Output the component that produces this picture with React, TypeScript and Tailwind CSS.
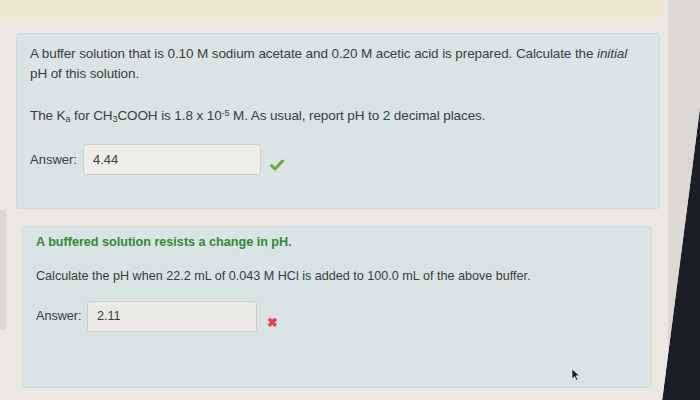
import React from "react";

export default function App() {
  return (
    <div className="w-[700px] h-[400px] overflow-hidden bg-[#1c1e27] font-['Liberation_Sans',Arial,sans-serif] text-[#3a3d40]">
      {/* screen surface, slanted right edge from the photo's bezel */}
      <div className="w-full h-full flex bg-[#d9d6d1] [clip-path:polygon(0_0,100%_0,100%_27%,94.6%_100%,0_100%)]">
        <div className="w-[668px] h-full flex flex-col bg-[#ebe8e3]">
          <div className="h-[18px] w-[665px] bg-[#eee6cf] shrink-0" />

          <div className="flex flex-1">
            {/* left edge sliver of another panel */}
            <div className="w-[6px] shrink-0 flex flex-col">
              <div className="h-[192px]" />
              <div className="h-[120px] bg-[#d9d9d6]" />
            </div>

            <div className="flex-1 flex flex-col pl-[10px] pr-[8px]">
              {/* question 1 */}
              <div className="mt-[15px] h-[176px] rounded-[3px] bg-[#dbe4e4] border border-[#d2dada] pl-[13px] pr-[20px] pt-[10px]">
                <p className="text-[13.5px] leading-[20px] tracking-[-0.1px]">
                  A buffer solution that is 0.10 M sodium acetate and 0.20 M acetic acid is prepared. Calculate the <i>initial</i> pH of this solution.
                </p>
                <p className="mt-[22px] text-[13.5px] leading-[20px] tracking-[-0.1px]">
                  The K<sub className="text-[9px]">a</sub> for CH<sub className="text-[9px]">3</sub>COOH is 1.8 x 10<sup className="text-[9px]">-5</sup> M. As usual, report pH to 2 decimal places.
                </p>
                <div className="mt-[18px] flex items-center">
                  <span className="text-[13px] w-[53px]">Answer:</span>
                  <div className="w-[178px] h-[31px] rounded-[3px] border border-[#cfcfca] bg-[#efedea] px-[9px] flex items-center text-[13px]">
                    4.44
                  </div>
                  <svg width="14" height="12" viewBox="0 0 14 12" className="ml-[9px] mt-[10px]">
                    <path d="M1.5 6.5 L5 10 L12.5 2" fill="none" stroke="#6aa83c" strokeWidth="3" strokeLinecap="round" strokeLinejoin="round" />
                  </svg>
                </div>
              </div>

              {/* question 2 */}
              <div className="mt-[17px] ml-[6px] mr-[8px] h-[162px] rounded-[3px] bg-[#d9e3e3] border border-[#d0d9d9] pl-[13px] pr-4 pt-[6px]">
                <p className="text-[12.6px] leading-[18px] font-bold text-[#2f8a35]">A buffered solution resists a change in pH.</p>
                <p className="mt-[16px] text-[12.6px] leading-[18px]">
                  Calculate the pH when 22.2 mL of 0.043 M HCl is added to 100.0 mL of the above buffer.
                </p>
                <div className="mt-[16px] flex items-center">
                  <span className="text-[12.6px] w-[51px]">Answer:</span>
                  <div className="w-[170px] h-[31px] rounded-[3px] border border-[#cfcfca] bg-[#ebe9e5] px-[9px] flex items-center text-[12.6px]">
                    2.11
                  </div>
                  <span className="ml-[10px] mt-[12px] text-[13px] font-bold text-[#e0444a] leading-none">✖</span>
                </div>
                <div className="flex justify-end pr-[55px] mt-[36px]">
                  <svg width="9" height="13" viewBox="0 0 9 13">
                    <path d="M1 1 L1 11 L3.5 8.5 L5.5 12.5 L7 11.8 L5 7.8 L8.5 7.8 Z" fill="#1a1a1a" stroke="#fff" strokeWidth="0.6" />
                  </svg>
                </div>
              </div>
            </div>
          </div>
        </div>
        <div className="flex-1 bg-[#dcd9d4]" />
      </div>
    </div>
  );
}
